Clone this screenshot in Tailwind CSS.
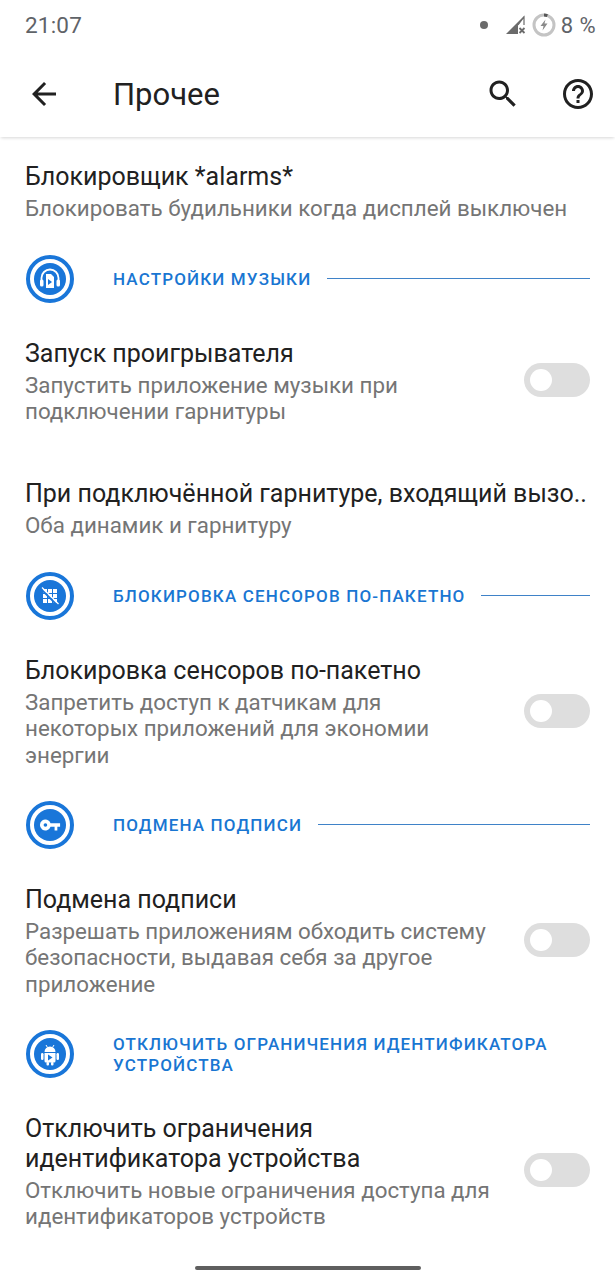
<!DOCTYPE html>
<html lang="ru">
<head>
  <meta charset="UTF-8" />
  <meta name="viewport" content="width=device-width, initial-scale=1.0" />
  <title>Прочее</title>
  <script src="https://cdn.jsdelivr.net/npm/@tailwindcss/browser@4"></script>
</head>
<body class="bg-white font-[Roboto,sans-serif] text-[#212121] w-[615px] h-[1280px] overflow-hidden relative">

  <!-- status bar -->
  <div class="h-[50px] pl-[25px] pr-[19px] flex items-center justify-between text-[#5f6368]">
    <span class="text-[22.5px] tracking-[0.2px] pt-[1px]">21:07</span>
    <div class="flex items-center">
      <span class="w-[8px] h-[8px] rounded-full bg-[#6b6b6b] mr-[17px]"></span>
      <svg class="w-[22px] h-[22px]" viewBox="0 0 22 22">
        <path d="M1 20 L19 2 V11 H13 V20 Z" fill="#6b6b6b"/>
        <path d="M13 11 L19 3 V11" fill="#fff" stroke="#6b6b6b" stroke-width="1.2"/>
        <path d="M14.5 14 l5 5 m0 -5 l-5 5" stroke="#6b6b6b" stroke-width="1.8" fill="none"/>
      </svg>
      <svg class="w-[24px] h-[24px] ml-[5px]" viewBox="0 0 24 24">
        <circle cx="12" cy="12" r="10" fill="none" stroke="#c4c4c4" stroke-width="3"/>
        <path d="M12 2 A10 10 0 0 1 15.4 2.6" fill="none" stroke="#555" stroke-width="3"/>
        <path d="M13.5 6.5 L8.5 13 H11.5 L10.5 17.5 L15.5 10.5 H12.5 Z" fill="#8a8a8a"/>
      </svg>
      <span class="text-[22px] ml-[5px] tracking-[0.4px]">8 %</span>
    </div>
  </div>

  <!-- toolbar -->
  <header class="h-[87px] flex items-center shadow-[0_2px_3px_-1px_rgba(0,0,0,0.16)] relative">
    <svg class="w-[36px] h-[36px] ml-[26px]" viewBox="0 0 24 24" fill="#212121">
      <path d="M20 11H7.83l5.59-5.59L12 4l-8 8 8 8 1.41-1.41L7.83 13H20v-2z"/>
    </svg>
    <h1 class="ml-[51px] text-[31px] text-[#212121] leading-none pt-[2px]">Прочее</h1>
    <svg class="w-[36px] h-[36px] ml-auto" viewBox="0 0 24 24" fill="#212121">
      <path d="M15.5 14h-.79l-.28-.27C15.41 12.59 16 11.11 16 9.5 16 5.91 13.09 3 9.5 3S3 5.91 3 9.5 5.91 16 9.5 16c1.61 0 3.09-.59 4.23-1.57l.27.28v.79l5 4.99L20.49 19l-4.99-5zm-6 0C7.01 14 5 11.99 5 9.5S7.01 5 9.5 5 14 7.01 14 9.5 11.99 14 9.5 14z"/>
    </svg>
    <svg class="w-[36px] h-[36px] ml-[39px] mr-[19px]" viewBox="0 0 24 24" fill="#212121">
      <path d="M11 18h2v-2h-2v2zm1-16C6.48 2 2 6.48 2 12s4.48 10 10 10 10-4.48 10-10S17.52 2 12 2zm0 18c-4.41 0-8-3.59-8-8s3.59-8 8-8 8 3.59 8 8-3.59 8-8 8zm0-14c-2.21 0-4 1.79-4 4h2c0-1.1.9-2 2-2s2 .9 2 2c0 2-3 1.75-3 5h2c0-2.25 3-2.5 3-5 0-2.21-1.79-4-4-4z"/>
    </svg>
  </header>

  <main>
    <!-- alarms -->
    <div class="h-[118px] pl-[25px] pr-[25px] pt-[25px]">
      <p class="text-[25px] leading-[30px]">Блокировщик *alarms*</p>
      <p class="text-[22.35px] leading-[26.3px] mt-[3px] text-[#757575] whitespace-nowrap">Блокировать будильники когда дисплей выключен</p>
    </div>

    <!-- music -->
    <div class="h-[48px] flex items-center pl-[26px] pr-[25px]">
      <span class="w-[48px] h-[48px] shrink-0 rounded-full border-[4px] border-[#1976d9] flex items-center justify-center">
        <span class="w-[32px] h-[32px] rounded-full bg-[#1976d9] flex items-center justify-center">
          <svg class="w-[26px] h-[26px]" viewBox="0 0 26 26" fill="none">
            <path d="M4.5 16v-4a8.500 8.500 0 0 1 17 0v4" stroke="#fff" stroke-width="1.8"/>
            <rect x="3" y="13.500" width="3.500" height="7" rx="1.500" fill="#fff"/>
            <rect x="19.500" y="13.500" width="3.500" height="7" rx="1.500" fill="#fff"/>
            <path d="M9 8h5l3 3v11H9z" fill="#fff"/>
            <path d="M11 13l4 3-4 3z" fill="#1976d9"/>
          </svg>
        </span>
      </span>
      <span class="ml-[39px] pt-[1px] text-[17px] font-medium tracking-[1.15px] text-[#1976d2] uppercase whitespace-nowrap">Настройки музыки</span>
      <span class="ml-[16px] mb-[2px] flex-1 h-px bg-[#3f82c8]"></span>
    </div>

    <div class="h-[136px] pl-[25px] pr-[25px] pt-[36px] flex items-start">
      <div class="w-[470px]">
        <p class="text-[25px] leading-[30px]">Запуск проигрывателя</p>
        <p class="text-[22.35px] leading-[26.3px] mt-[3px] text-[#757575]">Запустить приложение музыки при подключении гарнитуры</p>
      </div>
      <span class="ml-auto mt-[24px] w-[66px] h-[34px] rounded-full bg-[#dedede] flex items-center pl-[6px]">
        <span class="w-[22px] h-[22px] rounded-full bg-white"></span>
      </span>
    </div>

    <!-- headset call -->
    <div class="h-[133px] pl-[25px] pr-[25px] pt-[40px]">
      <p class="text-[25px] leading-[30px] whitespace-nowrap">При подключённой гарнитуре, входящий вызо..</p>
      <p class="text-[22.35px] leading-[26.3px] mt-[3px] text-[#757575]">Оба динамик и гарнитуру</p>
    </div>

    <!-- sensors -->
    <div class="h-[48px] flex items-center pl-[26px] pr-[25px]">
      <span class="w-[48px] h-[48px] shrink-0 rounded-full border-[4px] border-[#1976d9] flex items-center justify-center">
        <span class="w-[32px] h-[32px] rounded-full bg-[#1976d9] flex items-center justify-center">
          <svg class="w-[20px] h-[20px]" viewBox="0 0 20 20">
            <path d="M3 3h4v4H3zM8 3h4v4H8zM13 3h4v4h-4zM3 8h4v4H3zM8 8h4v4H8zM13 8h4v4h-4zM3 13h4v4H3zM8 13h4v4H8zM13 13h4v4h-4z" fill="#fff"/>
            <path d="M1.500 3.500l15 15" stroke="#1976d9" stroke-width="1.800"/>
            <path d="M2 1.500l16.500 16.500" stroke="#fff" stroke-width="1.300"/>
          </svg>
        </span>
      </span>
      <span class="ml-[39px] pt-[1px] text-[17px] font-medium tracking-[1.15px] text-[#1976d2] uppercase whitespace-nowrap">Блокировка сенсоров по-пакетно</span>
      <span class="ml-[16px] mb-[2px] flex-1 h-px bg-[#3f82c8]"></span>
    </div>

    <div class="h-[181px] pl-[25px] pr-[25px] pt-[36px] flex items-start">
      <div class="w-[470px]">
        <p class="text-[25px] leading-[30px]">Блокировка сенсоров по-пакетно</p>
        <p class="text-[22.35px] leading-[26.3px] mt-[3px] text-[#757575]">Запретить доступ к датчикам для некоторых приложений для экономии энергии</p>
      </div>
      <span class="ml-auto mt-[38px] w-[66px] h-[34px] rounded-full bg-[#dedede] flex items-center pl-[6px]">
        <span class="w-[22px] h-[22px] rounded-full bg-white"></span>
      </span>
    </div>

    <!-- signature spoofing -->
    <div class="h-[48px] flex items-center pl-[26px] pr-[25px]">
      <span class="w-[48px] h-[48px] shrink-0 rounded-full border-[4px] border-[#1976d9] flex items-center justify-center">
        <span class="w-[32px] h-[32px] rounded-full bg-[#1976d9] flex items-center justify-center">
          <svg class="w-[22px] h-[22px]" viewBox="0 0 24 24" fill="#fff">
            <path d="M12.650 10A6 6 0 1 0 12.650 14H17v4h3v-4h3v-4H12.650zM7 14a2 2 0 1 1 0-4 2 2 0 0 1 0 4z"/>
          </svg>
        </span>
      </span>
      <span class="ml-[39px] pt-[1px] text-[17px] font-medium tracking-[1.15px] text-[#1976d2] uppercase whitespace-nowrap">Подмена подписи</span>
      <span class="ml-[16px] mb-[2px] flex-1 h-px bg-[#3f82c8]"></span>
    </div>

    <div class="h-[181px] pl-[25px] pr-[25px] pt-[36px] flex items-start">
      <div class="w-[470px]">
        <p class="text-[25px] leading-[30px]">Подмена подписи</p>
        <p class="text-[22.35px] leading-[26.3px] mt-[3px] text-[#757575]">Разрешать приложениям обходить систему безопасности, выдавая себя за другое приложение</p>
      </div>
      <span class="ml-auto mt-[38px] w-[66px] h-[34px] rounded-full bg-[#dedede] flex items-center pl-[6px]">
        <span class="w-[22px] h-[22px] rounded-full bg-white"></span>
      </span>
    </div>

    <!-- device identifiers -->
    <div class="h-[48px] flex items-center pl-[26px] pr-[25px]">
      <span class="w-[48px] h-[48px] shrink-0 rounded-full border-[4px] border-[#1976d9] flex items-center justify-center">
        <span class="w-[32px] h-[32px] rounded-full bg-[#1976d9] flex items-center justify-center">
          <svg class="w-[26px] h-[26px]" viewBox="0 0 26 26" fill="#fff">
            <path d="M9 4l1.500 2.500M17 4l-1.500 2.500" stroke="#fff" stroke-width="1"/>
            <path d="M7.500 11a5.500 5.500 0 0 1 11 0z"/>
            <path d="M7.500 12h11v8a1.500 1.500 0 0 1-1.500 1.500H9A1.500 1.500 0 0 1 7.500 20z"/>
            <rect x="4" y="12" width="2.500" height="7" rx="1.200"/>
            <rect x="19.500" y="12" width="2.500" height="7" rx="1.200"/>
            <rect x="9.500" y="21" width="2.500" height="3.500" rx="1"/>
            <rect x="14" y="21" width="2.500" height="3.500" rx="1"/>
            <path d="M11 13.500l4.500 3-4.500 3z" fill="#1976d9"/>
          </svg>
        </span>
      </span>
      <span class="ml-[39px] pt-[1px] text-[17px] leading-[21px] font-medium tracking-[1.15px] text-[#1976d2] uppercase">Отключить ограничения идентификатора устройства</span>
    </div>

    <div class="pl-[25px] pr-[25px] pt-[36px] flex items-start">
      <div class="w-[470px]">
        <p class="text-[25px] leading-[30px]">Отключить ограничения идентификатора устройства</p>
        <p class="text-[22.35px] leading-[26.3px] mt-[3px] text-[#757575]">Отключить новые ограничения доступа для идентификаторов устройств</p>
      </div>
      <span class="ml-auto mt-[39px] w-[66px] h-[34px] rounded-full bg-[#dedede] flex items-center pl-[6px]">
        <span class="w-[22px] h-[22px] rounded-full bg-white"></span>
      </span>
    </div>
  </main>

  <!-- gesture pill -->
  <div class="absolute left-[195px] bottom-[10px] w-[226px] h-[4px] rounded-full bg-[#5f5f5f]"></div>
</body>
</html>
